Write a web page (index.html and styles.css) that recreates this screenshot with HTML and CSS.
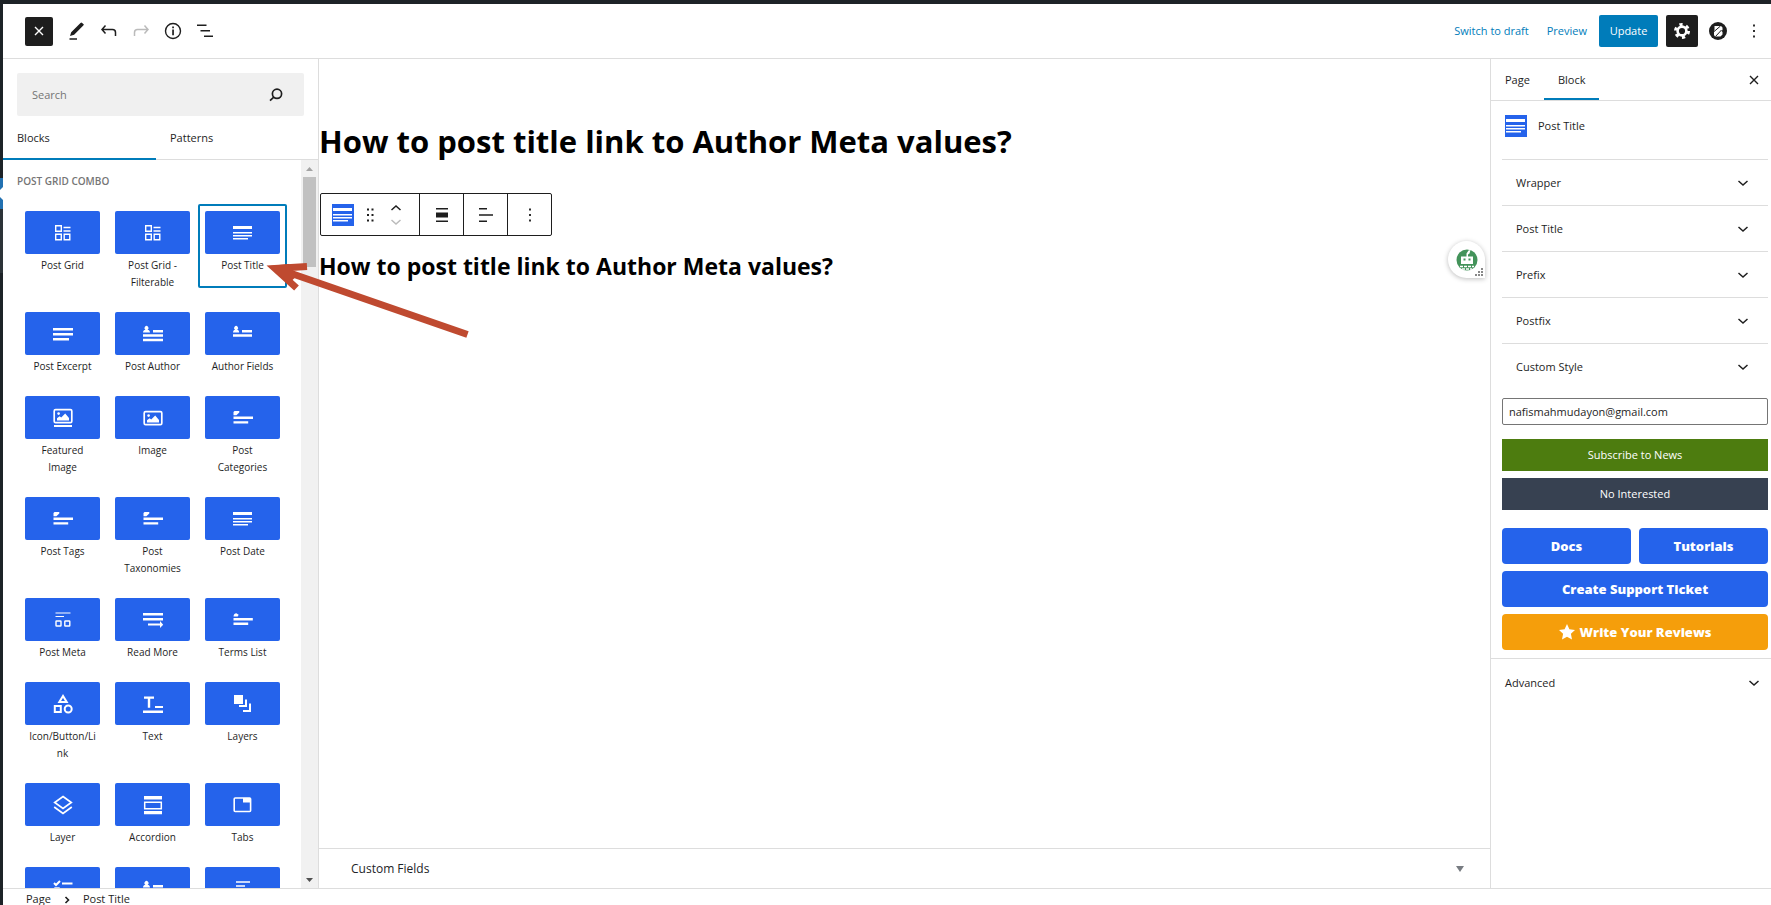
FILE: index.html
```html
<!DOCTYPE html>
<html lang="en">
<head>
<meta charset="utf-8">
<title>Edit Page</title>
<link rel="stylesheet" href="styles.css">
</head>
<body>
<svg class="sprite" aria-hidden="true">
  <symbol id="i-grid" viewBox="0 0 24 24"><path fill="none" stroke="currentColor" stroke-width="1.4" d="M4.7 4.7h5.6v5.6H4.7zM4.7 13.2h5.6v5.6H4.7zM13.2 13.2h5.6v5.6h-5.6zM12.5 6.5h7M12.5 10h7"/></symbol>
  <symbol id="i-title" viewBox="0 0 24 24"><path fill="currentColor" d="M2 5h19v3H2zM2 11h19v1.4H2zM2 14h19v1.4H2zM2 17h15v1.4H2z"/></symbol>
  <symbol id="i-excerpt" viewBox="0 0 24 24"><path fill="currentColor" d="M2 6h20v2.6H2zM2 11h20v2.6H2zM2 16h16v2.4H2z"/></symbol>
  <symbol id="i-author" viewBox="0 0 24 24"><path fill="currentColor" d="M12 8h10v2.6H12zM2 12.3h20v2.4H2zM2 16.8h20v2.4H2zM2 10.6c0-2 1.2-2.6 2.4-2.9a2 2 0 1 1 2.2 0c1.2.3 2.4.9 2.4 2.9z"/></symbol>
  <symbol id="i-fields" viewBox="0 0 24 24"><path fill="currentColor" d="M11 8h10v2.6H11zM2 12.3h19v2.4H2zM2 10.6c0-2 1-2.6 2-2.9a2 2 0 1 1 2.2 0c1.1.3 2 .9 2 2.9z"/></symbol>
  <symbol id="i-featured" viewBox="0 0 24 24"><rect x="3.2" y="3.7" width="17.6" height="13" rx="1.4" fill="none" stroke="currentColor" stroke-width="1.7"/><path fill="currentColor" d="M3 19h18v2H3zM6 14.4v-2.2l2.6-2 1.6 1.4 4-4L18 12v2.4z"/><circle cx="7.6" cy="7.6" r="1.3" fill="currentColor"/></symbol>
  <symbol id="i-image" viewBox="0 0 24 24"><rect x="3.2" y="5.7" width="17.6" height="13" rx="1.4" fill="none" stroke="currentColor" stroke-width="1.7"/><path fill="currentColor" d="M6 16.4v-2.2l2.6-2 1.6 1.4 4-4L18 14v2.4z"/><circle cx="7.6" cy="9.6" r="1.3" fill="currentColor"/></symbol>
  <symbol id="i-tag" viewBox="0 0 24 24"><path fill="currentColor" d="M2.500 9.200V6l1-1h4.800v1.400L5.400 9.200zM2.500 10.500H22V13H2.500zM2.500 15.200h14.700v2.400H2.500z"/></symbol>
  <symbol id="i-terms" viewBox="0 0 24 24"><path fill="currentColor" d="M2.5 8.4c.2-2 1.5-3.2 2.8-3.2l2.4 1.6-1 1.6zM2.5 10h19.300v2.500H2.500zM2.500 14.600h14.700V17H2.500z"/></symbol>
  <symbol id="i-meta" viewBox="0 0 24 24"><path fill="none" stroke="currentColor" stroke-width="1.2" d="M4.5 5h15M4.5 8.500h8.500"/><rect x="5" y="13" width="5" height="5" rx=".6" fill="none" stroke="currentColor" stroke-width="1.4"/><rect x="13.8" y="13" width="5" height="5" rx=".6" fill="none" stroke="currentColor" stroke-width="1.4"/></symbol>
  <symbol id="i-more" viewBox="0 0 24 24"><path fill="currentColor" d="M2 5h20v2.600H2zM2 10h20v2.600H2zM7 15.600h12V13l3.200 3.700L19 20v-2.400H7z"/></symbol>
  <symbol id="i-shapes" viewBox="0 0 24 24"><path fill="none" stroke="currentColor" stroke-width="2" d="M12 4l-3.700 6h7.400zM3.800 14h6v6h-6z"/><circle cx="17.200" cy="17" r="3.500" fill="none" stroke="currentColor" stroke-width="2"/></symbol>
  <symbol id="i-text" viewBox="0 0 24 24"><path fill="currentColor" d="M3 4.500h10v2.300H9.200v9H6.800v-9H3zM14 14h8v2h-8zM2 18.600h20V21H2z"/></symbol>
  <symbol id="i-layers" viewBox="0 0 24 24"><path fill="currentColor" d="M3 3h9v9H3z"/><path fill="none" stroke="currentColor" stroke-width="2" d="M8 14h7V7.500M12 19h7v-7.500"/></symbol>
  <symbol id="i-layer" viewBox="0 0 24 24"><path fill="none" stroke="currentColor" stroke-width="1.7" d="M12 3.500l8.300 6-8.300 6-8.300-6zM3.200 14l8.800 6.400 8.800-6.400"/></symbol>
  <symbol id="i-accordion" viewBox="0 0 24 24"><path fill="currentColor" d="M3 3h18v3.400H3zM3 18h18v3.200H3z"/><path fill="none" stroke="currentColor" stroke-width="1.500" d="M3.700 9.200h16.600v6.500H3.700z"/></symbol>
  <symbol id="i-tabs" viewBox="0 0 24 24"><rect x="3.200" y="5" width="16.400" height="13.500" rx="1" fill="none" stroke="currentColor" stroke-width="1.600"/><path fill="currentColor" d="M12 5h8v4.500h-8z"/></symbol>
  <symbol id="i-check" viewBox="0 0 24 24"><path fill="none" stroke="currentColor" stroke-width="2" d="M3 6l2 2 4-4M11 6.500h10.500M11 15h10.500"/><rect x="4" y="11" width="4" height="4" fill="none" stroke="currentColor" stroke-width="1.400"/></symbol>
  <symbol id="i-form" viewBox="0 0 24 24"><path fill="none" stroke="currentColor" stroke-width="1.400" d="M5 5h14M5 9h9M5 14h14"/></symbol>
  <symbol id="i-chev" viewBox="0 0 12 12"><path fill="none" stroke="currentColor" stroke-width="1.500" d="M1.500 4L6 8l4.500-4"/></symbol>
  <symbol id="i-close" viewBox="0 0 12 12"><path fill="none" stroke="currentColor" stroke-width="1.400" d="M2 2l8 8M10 2l-8 8"/></symbol>
  <symbol id="i-kebab" viewBox="0 0 24 24"><path fill="currentColor" d="M11 5h2v2h-2zM11 11h2v2h-2zM11 17h2v2h-2z"/></symbol>
</svg>

<svg class="menu-marker" width="3" height="95" viewBox="0 0 3 95" aria-hidden="true"><path fill="#2271b1" d="M0 0h3v31H0z"/><path fill="#2c3338" d="M0 31h3v64H0z"/><path fill="#fff" d="M3 9v13L0 19v-7z"/></svg>

<div class="editor">
  <header class="topbar">
    <div class="tools">
      <button class="tool tool-close" aria-label="Toggle block inserter"><svg width="12" height="12"><use href="#i-close"/></svg></button>
      <button class="tool" aria-label="Tools"><svg width="22" height="22" viewBox="0 0 22 22"><path fill="currentColor" d="M4 16l1.200-3.800L14.500 3l1-.6 2.400 2-.6 1.100-9.200 9.200zM3.500 18.200H11v1.500H3.500z"/></svg></button>
      <button class="tool" aria-label="Undo"><svg width="22" height="22" viewBox="0 0 22 22"><path fill="none" stroke="currentColor" stroke-width="1.500" d="M7.500 5.500L4 9.500l3.500 4M4 9.500h10.500q3 0 3 3V16"/></svg></button>
      <button class="tool tool-off" aria-label="Redo" disabled><svg width="22" height="22" viewBox="0 0 22 22"><path fill="none" stroke="currentColor" stroke-width="1.500" d="M14.500 5.500l3.500 4-3.500 4M18 9.500H7.500q-3 0-3 3V16"/></svg></button>
      <button class="tool" aria-label="Details"><svg width="22" height="22" viewBox="0 0 22 22"><circle cx="11" cy="11" r="7.500" fill="none" stroke="currentColor" stroke-width="1.400"/><path fill="currentColor" d="M10.200 6.500h1.700v1.700h-1.700zM10.200 9.500h1.700v5.800h-1.700z"/></svg></button>
      <button class="tool" aria-label="List view"><svg width="22" height="22" viewBox="0 0 22 22"><path fill="currentColor" d="M3 4.500h9.500V6H3zM6.500 10H16v1.500H6.500zM10 15.500h9V17h-9z"/></svg></button>
    </div>
    <div class="actions">
      <a class="action-link" href="#draft">Switch to draft</a>
      <a class="action-link" href="#preview">Preview</a>
      <button class="btn-update">Update</button>
      <button class="btn-settings" aria-label="Settings"><svg width="18" height="18" viewBox="0 0 18 18"><path fill="none" stroke="currentColor" stroke-width="3" stroke-dasharray="3.200 3.630" d="M15.520 9a6.520 6.520 0 1 1-13.040 0a6.520 6.520 0 1 1 13.040 0z"/><circle cx="9" cy="9" r="4.400" fill="none" stroke="currentColor" stroke-width="2.600"/></svg></button>
      <button class="btn-plugin" aria-label="Blocks plugin"><svg width="18" height="18" viewBox="0 0 18 18"><circle cx="9" cy="9" r="9" fill="#1e1e1e"/><path fill="#fff" d="M5.500 4h6.500l1.500 1.500V8l-1 1 1 1v2.500L11.500 14.500H6L5 13V9l.5-1z"/><path stroke="#1e1e1e" stroke-width="1" d="M4.500 10l7-6M6.500 14.500l6-6.500"/></svg></button>
      <button class="btn-kebab" aria-label="Options"><svg width="22" height="22"><use href="#i-kebab"/></svg></button>
    </div>
  </header>

  <div class="workspace">
    <aside class="inserter">
      <div class="search">
        <input type="search" placeholder="Search" aria-label="Search">
        <svg width="16" height="16" viewBox="0 0 16 16"><circle cx="9" cy="6.800" r="4.600" fill="none" stroke="currentColor" stroke-width="1.700"/><path stroke="currentColor" stroke-width="1.700" d="M5.800 10.200L2 13.600"/></svg>
      </div>
      <div class="inserter-tabs" role="tablist">
        <button class="inserter-tab is-active" role="tab" aria-selected="true">Blocks</button>
        <button class="inserter-tab" role="tab" aria-selected="false">Patterns</button>
      </div>
      <div class="library">
        <div class="library-main">
          <h2 class="library-title">Post Grid Combo</h2>
          <div class="blocks">
            <button class="block"><span class="tile"><svg><use href="#i-grid"/></svg></span><span class="name">Post Grid</span></button>
            <button class="block"><span class="tile"><svg><use href="#i-grid"/></svg></span><span class="name">Post Grid - Filterable</span></button>
            <button class="block is-selected"><span class="tile"><svg><use href="#i-title"/></svg></span><span class="name">Post Title</span></button>
            <button class="block"><span class="tile"><svg><use href="#i-excerpt"/></svg></span><span class="name">Post Excerpt</span></button>
            <button class="block"><span class="tile"><svg><use href="#i-author"/></svg></span><span class="name">Post Author</span></button>
            <button class="block"><span class="tile"><svg><use href="#i-fields"/></svg></span><span class="name">Author Fields</span></button>
            <button class="block"><span class="tile"><svg><use href="#i-featured"/></svg></span><span class="name">Featured Image</span></button>
            <button class="block"><span class="tile"><svg><use href="#i-image"/></svg></span><span class="name">Image</span></button>
            <button class="block"><span class="tile"><svg><use href="#i-tag"/></svg></span><span class="name">Post Categories</span></button>
            <button class="block"><span class="tile"><svg><use href="#i-tag"/></svg></span><span class="name">Post Tags</span></button>
            <button class="block"><span class="tile"><svg><use href="#i-tag"/></svg></span><span class="name">Post Taxonomies</span></button>
            <button class="block"><span class="tile"><svg><use href="#i-title"/></svg></span><span class="name">Post Date</span></button>
            <button class="block"><span class="tile"><svg><use href="#i-meta"/></svg></span><span class="name">Post Meta</span></button>
            <button class="block"><span class="tile"><svg><use href="#i-more"/></svg></span><span class="name">Read More</span></button>
            <button class="block"><span class="tile"><svg><use href="#i-terms"/></svg></span><span class="name">Terms List</span></button>
            <button class="block"><span class="tile"><svg><use href="#i-shapes"/></svg></span><span class="name">Icon/Button/Li<wbr>nk</span></button>
            <button class="block"><span class="tile"><svg><use href="#i-text"/></svg></span><span class="name">Text</span></button>
            <button class="block"><span class="tile"><svg><use href="#i-layers"/></svg></span><span class="name">Layers</span></button>
            <button class="block"><span class="tile"><svg><use href="#i-layer"/></svg></span><span class="name">Layer</span></button>
            <button class="block"><span class="tile"><svg><use href="#i-accordion"/></svg></span><span class="name">Accordion</span></button>
            <button class="block"><span class="tile"><svg><use href="#i-tabs"/></svg></span><span class="name">Tabs</span></button>
            <button class="block" aria-label="Checklist"><span class="tile"><svg><use href="#i-check"/></svg></span></button>
            <button class="block" aria-label="User fields"><span class="tile"><svg><use href="#i-author"/></svg></span></button>
            <button class="block" aria-label="Form"><span class="tile"><svg><use href="#i-form"/></svg></span></button>
          </div>
        </div>
        <div class="scrollbar" aria-hidden="true">
          <svg width="17" height="17" viewBox="0 0 17 17"><path fill="#a3a3a3" d="M5 11l3.500-4 3.500 4z"/></svg>
          <span class="thumb"></span>
          <svg class="scroll-down" width="17" height="17" viewBox="0 0 17 17"><path fill="#505050" d="M5 7l3.500 4 3.500-4z"/></svg>
        </div>
      </div>
    </aside>

    <main class="canvas">
      <div class="document">
        <h1 class="page-title">How to post title link to Author Meta values?</h1>
        <div class="block-toolbar" role="toolbar">
          <div class="group group-main">
            <button class="chip" aria-label="Post Title"><svg width="24" height="24"><use href="#i-title"/></svg></button>
            <button aria-label="Drag"><svg width="9" height="16" viewBox="0 0 9 16"><path fill="currentColor" d="M1 1.500h2v2H1zM5.500 1.500h2v2h-2zM1 7h2v2H1zM5.500 7h2v2h-2zM1 12.500h2v2H1zM5.500 12.500h2v2h-2z"/></svg></button>
            <span class="movers">
              <button aria-label="Move up"><svg class="flip" width="12" height="12"><use href="#i-chev"/></svg></button>
              <button class="tool-off" aria-label="Move down" disabled><svg width="12" height="12"><use href="#i-chev"/></svg></button>
            </span>
          </div>
          <div class="group"><button aria-label="Align"><svg width="16" height="16" viewBox="0 0 16 16"><path fill="currentColor" d="M2 1h12v1.500H2zM2 5.500h12v5H2zM2 13.500h12V15H2z"/></svg></button></div>
          <div class="group"><button aria-label="Align text"><svg width="16" height="16" viewBox="0 0 16 16"><path fill="currentColor" d="M1 1h8v1.500H1zM1 7.300h14v1.500H1zM1 13.500h8V15H1z"/></svg></button></div>
          <div class="group"><button aria-label="Options"><svg width="22" height="22"><use href="#i-kebab"/></svg></button></div>
        </div>
        <h2 class="post-title">How to post title link to Author Meta values?</h2>
      </div>
      <button class="metabox"><span>Custom Fields</span><svg width="8" height="6" viewBox="0 0 8 6"><path fill="#787c82" d="M0 0h8L4 6z"/></svg></button>
      <div class="assistant"><svg width="22" height="22" viewBox="0 0 22 22"><circle cx="11" cy="11" r="10.500" fill="#43935a"/><path fill="#fff" d="M10.500 4.500l2-3 2-.5-1 3.500-1.500 1V7.500H17v7.500H5V7.500h5.500z"/><path fill="#43935a" d="M7.500 9.500h2v2h-2zM12.500 9.500h2v2h-2z"/><path stroke="#fff" stroke-width="1.500" stroke-dasharray="3 1" d="M4 17.500h14M6 20h10"/></svg>
        <svg class="grip" width="8" height="8" viewBox="0 0 8 8"><path fill="#888" d="M6 0h2v2H6zM6 3h2v2H6zM3 3h2v2H3zM6 6h2v2H6zM3 6h2v2H3zM0 6h2v2H0z"/></svg></div>
    </main>

    <aside class="sidebar">
      <div class="side-tabs">
        <button class="side-tab">Page</button>
        <button class="side-tab is-active">Block</button>
        <button class="side-close" aria-label="Close settings"><svg width="12" height="12"><use href="#i-close"/></svg></button>
      </div>
      <div class="card"><span class="chip"><svg width="24" height="24"><use href="#i-title"/></svg></span><span>Post Title</span></div>
      <div class="panels">
        <button class="panel"><span>Wrapper</span><svg width="12" height="12"><use href="#i-chev"/></svg></button>
        <button class="panel"><span>Post Title</span><svg width="12" height="12"><use href="#i-chev"/></svg></button>
        <button class="panel"><span>Prefix</span><svg width="12" height="12"><use href="#i-chev"/></svg></button>
        <button class="panel"><span>Postfix</span><svg width="12" height="12"><use href="#i-chev"/></svg></button>
        <button class="panel"><span>Custom Style</span><svg width="12" height="12"><use href="#i-chev"/></svg></button>
        <input class="email" type="email" value="nafismahmudayon@gmail.com" aria-label="Email">
        <div class="choices">
          <button class="subscribe">Subscribe to News</button>
          <button class="decline">No Interested</button>
        </div>
        <div class="links">
          <a class="link-btn" href="#docs">Docs</a>
          <a class="link-btn" href="#tutorials">Tutorials</a>
          <a class="link-btn link-wide" href="#support">Create Support Ticket</a>
          <a class="link-btn link-wide link-review" href="#reviews"><svg width="16" height="16" viewBox="0 0 16 16"><path fill="currentColor" d="M8 0l2.400 5.200 5.600.7-4.100 3.900 1.100 5.700L8 12.700l-5 2.800 1.100-5.700L0 5.900l5.600-.7z"/></svg>Write Your Reviews</a>
        </div>
      </div>
      <button class="advanced"><span>Advanced</span><svg width="12" height="12"><use href="#i-chev"/></svg></button>
    </aside>
  </div>

  <footer class="crumbs"><span>Page</span><svg width="6" height="8" viewBox="0 0 6 8"><path fill="none" stroke="currentColor" stroke-width="1.600" d="M1.500 1L4.500 4l-3 3"/></svg><span>Post Title</span></footer>
</div>

<svg class="pointer" width="204" height="80" viewBox="0 0 204 80" aria-hidden="true"><path fill="none" stroke="#bf4a30" stroke-width="7" d="M12 8.500L202.500 74.500M42 6.500L10 8.500 31.500 28"/><path fill="#bf4a30" d="M4 6l20-2 8 12-8 7z"/></svg>
</body>
</html>
```
FILE: styles.css
```css
* { box-sizing: border-box; }

body {
  margin: 0;
  height: 100vh;
  padding: 4px 0 0 3px;
  overflow: hidden;
  background: #1d2327;
  color: #1e1e1e;
  font: 11px/16px "Open Sans", "Noto Sans", sans-serif;
}

button, input {
  margin: 0;
  padding: 0;
  border: 0;
  background: none;
  color: inherit;
  font: inherit;
}

button { display: flex; align-items: center; justify-content: center; cursor: pointer; }
svg { display: block; flex: none; }
a { text-decoration: none; }
.sprite { position: absolute; width: 0; height: 0; }

.menu-marker { position: absolute; left: 0; top: 178px; }

.editor { display: flex; flex-direction: column; height: 100%; background: #fff; }

.topbar {
  display: flex;
  flex: none;
  align-items: center;
  justify-content: space-between;
  height: 55px;
  padding: 0 6px 0 22px;
  border-bottom: 1px solid #ddd;
}
.tools { display: flex; align-items: center; gap: 3px; }
.tool { width: 29px; height: 29px; }
.tool-close { width: 28px; margin-right: 6px; border-radius: 2px; background: #1e1e1e; color: #fff; }
.tool-off { color: #bbb; }
.actions { display: flex; align-items: center; }
.action-link { margin-right: 18px; color: #007cba; }
.btn-update { width: 59px; height: 32px; margin-right: 8px; margin-left: -6px; border-radius: 2px; background: #007cba; color: #fff; }
.btn-settings { width: 32px; height: 32px; margin-right: 11px; border-radius: 2px; background: #1e1e1e; color: #fff; }
.btn-plugin { margin-right: 16px; }

.workspace { display: flex; flex: 1; min-height: 0; }

.inserter { display: flex; flex: none; flex-direction: column; width: 316px; border-right: 1px solid #ddd; }
.search { display: flex; align-items: center; height: 43px; margin: 14px 14px 0; padding: 0 20px 0 15px; border-radius: 2px; background: #f0f0f0; }
.search input { flex: 1; min-width: 0; outline: 0; }
.search input::placeholder { color: #757575; opacity: 1; }
.inserter-tabs { display: flex; height: 44px; border-bottom: 1px solid #ddd; }
.inserter-tab { flex: 0 0 153px; justify-content: flex-start; height: 44px; padding-left: 14px; font-weight: 500; }
.is-active { box-shadow: inset 0 -2px #007cba; }
.library { display: flex; flex: 1; min-height: 0; }
.library-main { flex: 1; overflow: hidden; }
.library-title { margin: 13px 0 15px 14px; color: #757575; font-size: 10px; font-weight: 600; line-height: 16px; text-transform: uppercase; }
.blocks { display: grid; grid-template-columns: repeat(3, 89px); gap: 17px 1px; padding-left: 15px; }
.block { flex-direction: column; justify-content: flex-start; align-items: stretch; padding: 7px 7px 0; border-radius: 2px; }
.block.is-selected { box-shadow: inset 0 0 0 2px #007cba; }
.tile { display: flex; align-items: center; justify-content: center; height: 43px; border-radius: 2px; background: #2563eb; color: #fff; }
.tile svg { width: 24px; height: 24px; }
.name { margin: 3px 0 -3px; padding: 0 3px; font-size: 10px; line-height: 17px; text-align: center; }
.scrollbar { display: flex; flex-direction: column; align-items: center; width: 17px; background: #f1f1f1; }
.thumb { width: 13px; height: 90px; background: #c1c1c1; }
.scroll-down { margin-top: auto; }

.canvas { position: relative; display: flex; flex: 1; flex-direction: column; min-width: 0; }
.document { flex: 1; padding: 60px 0 0; color: #000; }
.page-title { margin: 0 0 30px; font-size: 31px; font-weight: 700; line-height: 44px; }
.block-toolbar { display: flex; width: fit-content; height: 43px; margin-left: 1px; border: 1px solid #1e1e1e; border-radius: 2px; color: #1e1e1e; }
.group { display: flex; align-items: center; justify-content: center; width: 44px; border-left: 1px solid #1e1e1e; }
.group-main { justify-content: flex-start; width: 98px; padding-left: 11px; gap: 12px; border-left: 0; }
.chip { display: flex; align-items: center; justify-content: center; width: 22px; height: 22px; overflow: hidden; background: #2563eb; color: #fff; }
.movers { display: flex; flex-direction: column; gap: 2px; margin-left: 3px; }
.flip { transform: rotate(180deg); }
.post-title { margin: 12px 0 0; font-size: 23px; font-weight: 700; line-height: 36px; }
.metabox { justify-content: space-between; width: 100%; height: 40px; padding: 0 26px 0 32px; border-top: 1px solid #ddd; color: #1d2327; font-size: 12px; }
.assistant { position: absolute; top: 182px; right: 5px; display: flex; align-items: center; justify-content: center; width: 37px; height: 37px; border-radius: 50% 50% 0 50%; background: #fff; box-shadow: 0 1px 5px #0004; }
.grip { position: absolute; right: 2px; bottom: 2px; }

.sidebar { flex: none; width: 281px; border-left: 1px solid #ddd; font-weight: 500; }
.side-tabs { display: flex; height: 42px; border-bottom: 1px solid #ddd; }
.side-tab { padding: 0 14px; }
.side-close { margin-left: auto; padding: 0 11px; }
.card { display: flex; gap: 11px; padding: 14px 14px 22px; line-height: 22px; }
.panels { padding: 0 3px 8px 11px; }
.panel, .advanced { justify-content: space-between; width: 100%; height: 46px; padding: 0 19px 0 14px; border-top: 1px solid #ddd; font-weight: 500; }
.email { display: block; width: 100%; height: 27px; margin-top: 9px; padding: 0 6px; border: 1px solid #757575; border-radius: 2px; }
.choices { display: grid; gap: 7px; margin: 14px 0 18px; }
.choices button { height: 32px; color: #fff; }
.choices .subscribe { background: #4d7c0f; }
.choices .decline { background: #374151; }
.links { display: grid; grid-template-columns: 1fr 1fr; gap: 7px 8px; }
.link-btn { display: flex; align-items: center; justify-content: center; gap: 5px; height: 36px; border-radius: 4px; background: #2563eb; color: #fff; font-size: 13px; font-weight: 800; }
.link-wide { grid-column: 1 / -1; }
.link-review { background: #f59e0b; }
.advanced { height: 48px; padding: 0 11px 0 14px; }

.crumbs { display: flex; flex: none; align-items: flex-start; gap: 13px; height: 17px; padding-left: 23px; border-top: 1px solid #ddd; line-height: 20px; }
.crumbs svg { margin-top: 7px; }

.pointer { position: absolute; left: 265px; top: 260px; }
```
